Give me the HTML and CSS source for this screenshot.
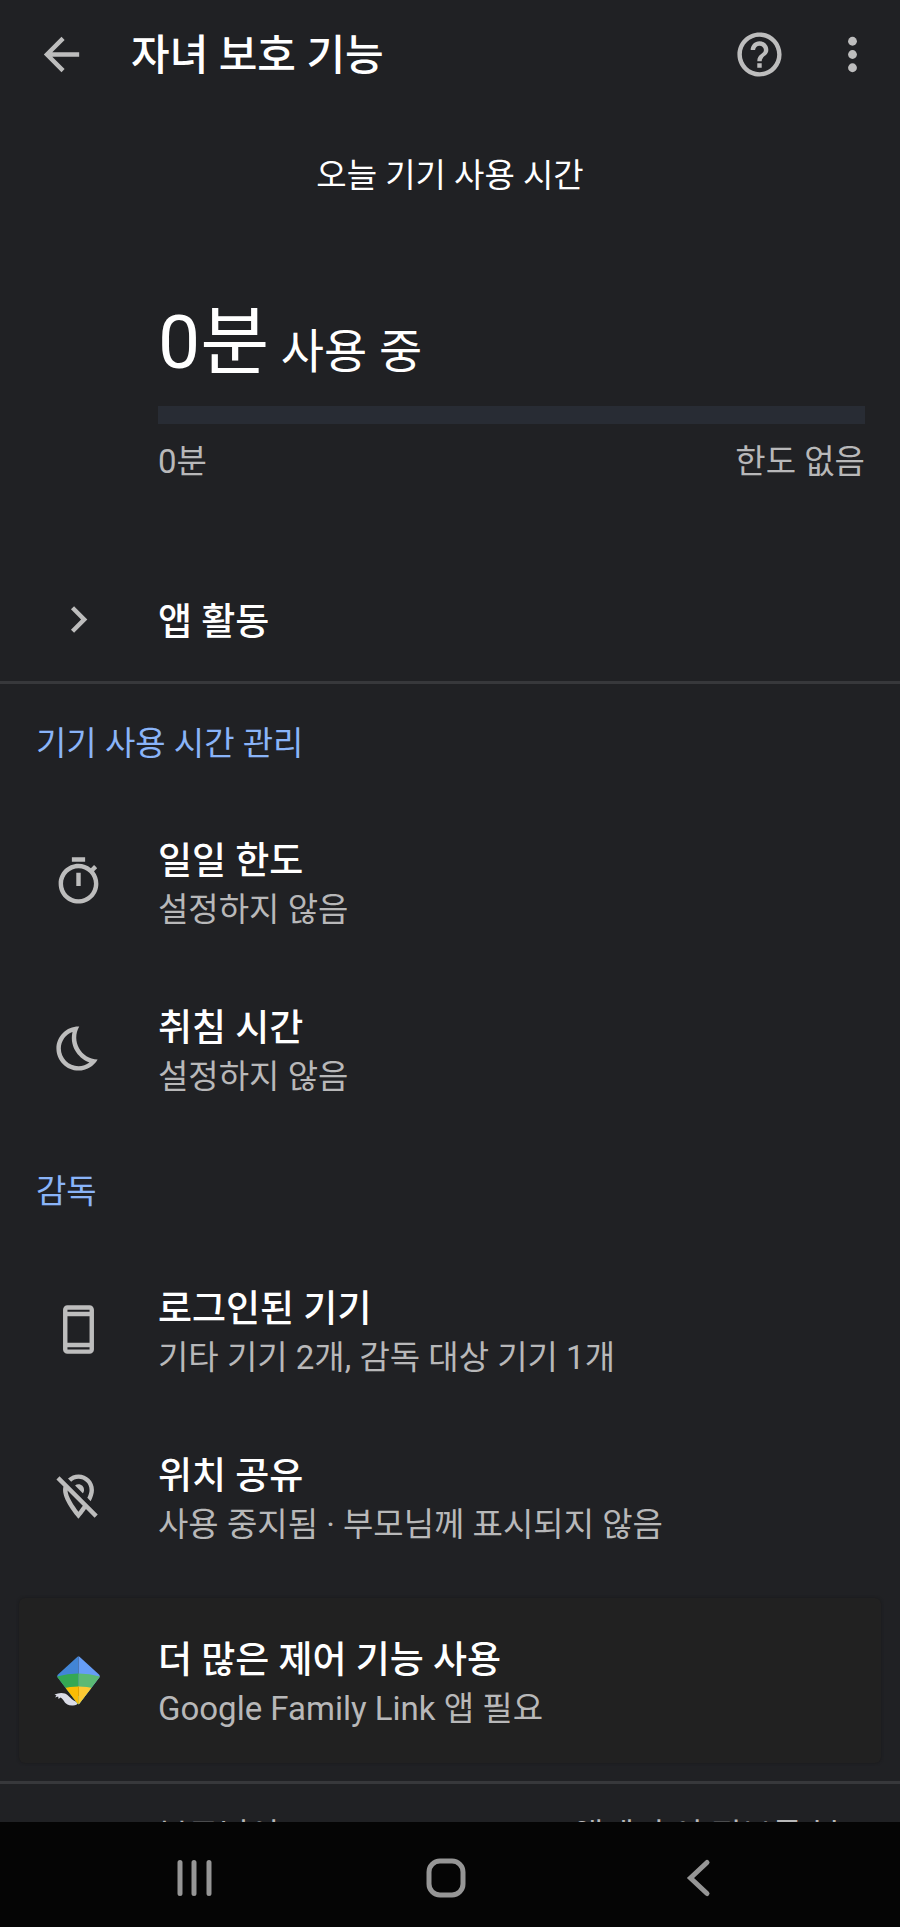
FILE: index.html
```html
<!DOCTYPE html>
<html lang="ko">
<head>
<meta charset="utf-8">
<meta name="viewport" content="width=device-width, initial-scale=1">
<title>자녀 보호 기능</title>
<link rel="stylesheet" href="styles.css">
</head>
<body>
<div class="app">
  <header class="topbar">
    <button class="icon-button" aria-label="뒤로">
      <svg class="icon" viewBox="0 0 24 24"><path d="M20 11H7.830l5.590-5.590L12 4l-8 8 8 8 1.410-1.410L7.830 13H20v-2z"/></svg>
    </button>
    <h1 class="topbar-title">자녀 보호 기능</h1>
    <button class="icon-button" aria-label="도움말">
      <svg class="icon" viewBox="0 0 24 24"><path d="M11 18h2v-2h-2v2zm1-16C6.480 2 2 6.480 2 12s4.480 10 10 10 10-4.480 10-10S17.520 2 12 2zm0 18c-4.410 0-8-3.590-8-8s3.590-8 8-8 8 3.590 8 8-3.590 8-8 8zm0-14c-2.210 0-4 1.790-4 4h2c0-1.100.9-2 2-2s2 .9 2 2c0 2-3 1.750-3 5h2c0-2.250 3-2.500 3-5 0-2.210-1.790-4-4-4z"/></svg>
    </button>
    <button class="icon-button" aria-label="옵션 더보기">
      <svg class="icon" viewBox="0 0 24 24"><circle cx="12" cy="6" r="2"/><circle cx="12" cy="12" r="2"/><circle cx="12" cy="18" r="2"/></svg>
    </button>
  </header>

  <main class="content">
    <section class="usage">
      <h2 class="usage-heading">오늘 기기 사용 시간</h2>
      <div class="usage-body">
        <p class="usage-total"><span class="usage-value">0분</span> 사용 중</p>
        <progress class="usage-bar" max="100" value="0" aria-label="기기 사용 시간"></progress>
        <div class="usage-scale"><span>0분</span><span>한도 없음</span></div>
      </div>
    </section>

    <button class="row row-single">
      <svg class="icon" viewBox="0 0 24 24"><path d="M10 6 8.590 7.410 13.170 12l-4.580 4.590L10 18l6-6-6-6z"/></svg>
      <span class="row-text"><span class="row-title">앱 활동</span></span>
    </button>

    <section class="group">
      <h2 class="group-heading">기기 사용 시간 관리</h2>
      <button class="row">
        <svg class="icon" viewBox="0 0 24 24"><path d="M15 1H9v2h6V1zm-4 13h2V8h-2v6zm8.030-6.610 1.420-1.420c-.43-.51-.9-.99-1.410-1.410l-1.420 1.420C16.070 4.740 14.120 4 12 4c-4.970 0-9 4.030-9 9s4.020 9 9 9 9-4.030 9-9c0-2.120-.74-4.070-1.970-5.610zM12 20c-3.870 0-7-3.130-7-7s3.130-7 7-7 7 3.130 7 7-3.130 7-7 7z"/></svg>
        <span class="row-text"><span class="row-title">일일 한도</span><span class="row-note">설정하지 않음</span></span>
      </button>
      <button class="row">
        <svg class="icon" viewBox="0 0 24 24"><path d="M9.270 4.490c-1.630 7.540 3.750 12.410 7.660 13.800C15.540 19.380 13.810 20 12 20c-4.410 0-8-3.590-8-8 0-3.450 2.200-6.400 5.270-7.510m2.720-2.480C6.620 2 2 6.380 2 12c0 5.520 4.480 10 10 10 3.710 0 6.930-2.020 8.660-5.020-7.510-.25-12.090-8.430-8.320-14.970h-.35z"/></svg>
        <span class="row-text"><span class="row-title">취침 시간</span><span class="row-note">설정하지 않음</span></span>
      </button>
    </section>

    <section class="group group-last">
      <h2 class="group-heading">감독</h2>
      <button class="row">
        <svg class="icon" viewBox="0 0 24 24"><path d="M17 1H7c-1.100 0-2 .9-2 2v18c0 1.100.9 2 2 2h10c1.100 0 2-.9 2-2V3c0-1.100-.9-2-2-2zm0 20H7v-1h10v1zm0-3H7V6h10v12zm0-14H7V3h10v1z"/></svg>
        <span class="row-text"><span class="row-title">로그인된 기기</span><span class="row-note">기타 기기 2개, 감독 대상 기기 1개</span></span>
      </button>
      <button class="row">
        <svg class="icon" viewBox="0 0 24 24"><path d="M12 4c2.760 0 5 2.240 5 5 0 1.060-.39 2.320-1 3.620l1.490 1.490C18.370 12.360 19 10.570 19 9c0-3.870-3.130-7-7-7-1.840 0-3.500.71-4.750 1.860l1.430 1.430C9.550 4.490 10.720 4 12 4zm0 2.500c-.59 0-1.130.21-1.560.56l3.500 3.500c.35-.43.56-.97.56-1.560 0-1.380-1.120-2.500-2.500-2.500zM3.410 2.860 2 4.270l3.180 3.180C5.070 7.950 5 8.470 5 9c0 5.250 7 13 7 13s1.670-1.850 3.380-4.350L19.300 21.570l1.410-1.410L3.410 2.860zM12 18.880c-2.010-2.580-4.800-6.740-4.980-9.590l6.920 6.920c-.65.98-1.330 1.890-1.940 2.670z"/></svg>
        <span class="row-text"><span class="row-title">위치 공유</span><span class="row-note">사용 중지됨 · 부모님께 표시되지 않음</span></span>
      </button>
      <button class="row row-card">
        <svg class="icon" viewBox="0 0 53 53">
          <defs><clipPath id="kite"><path d="M25.500 2.800Q26.500 1.500 27.500 2.800L47 20.500Q48.300 22 47.300 23.500L27.500 49.500Q26.500 51 25.500 49.500L5.700 23.500Q4.700 22 6 20.500Z"/></clipPath></defs>
          <path fill="#dadce6" d="M2.500 40.500Q8 38 13 39.500C17 41 19 46.500 26.500 48.500Q25 51.500 21 51.500C12 52 13 46 8.500 43.500L6.500 45 6.200 42.500 3 43.500 4.500 41.500Z"/>
          <g clip-path="url(#kite)">
            <path fill="#4285d6" d="M0 0h26.500v53H0z"/><path fill="#669df6" d="M26.500 0H53v53H26.500z"/>
            <path fill="#34a853" d="M0 24Q13 19.500 26.500 19.500V53H0z"/><path fill="#5bb974" d="M26.500 19.500Q40 19.500 53 24V53H26.500z"/>
            <path fill="#fbbc04" d="M10 34.500Q18 32.500 26.500 32.500V53H10z"/><path fill="#fcc934" d="M26.500 32.500Q35 32.500 43 34.500V53H26.500z"/>
            <path fill="#e3a500" d="M26 32.500h1V42h-1z"/>
          </g>
        </svg>
        <span class="row-text"><span class="row-title">더 많은 제어 기능 사용</span><span class="row-note">Google Family Link 앱 필요</span></span>
      </button>
    </section>

    <p class="footnote">부모님이 Google Family Link 앱에서 이 정보를 볼 수 있습니다.</p>
  </main>

  <nav class="navbar" aria-label="시스템 탐색">
    <button class="nav-button" aria-label="최근 앱">
      <svg class="nav-icon" viewBox="0 0 40 40"><path d="M6 4.500v31M20 4.500v31M35 4.500v31"/></svg>
    </button>
    <button class="nav-button" aria-label="홈">
      <svg class="nav-icon" viewBox="0 0 40 40"><rect x="3" y="3" width="34" height="34" rx="11"/></svg>
    </button>
    <button class="nav-button" aria-label="뒤로">
      <svg class="nav-icon" viewBox="0 0 40 40"><path d="M28 4.500 11.500 20 28 35.500"/></svg>
    </button>
  </nav>
</div>
</body>
</html>
```
FILE: styles.css
```css
* {
  box-sizing: border-box;
}

body,
h1,
h2,
p {
  margin: 0;
}

body {
  background: #202124;
  color: #fff;
  font-family: Roboto, "Noto Sans CJK KR", sans-serif;
  font-size: 33px;
  line-height: 46px;
}

h1,
h2 {
  font-size: 33px;
  font-weight: 400;
}

button {
  padding: 0;
  border: 0;
  background: none;
  color: inherit;
  font: inherit;
  text-align: left;
}

.app {
  display: flex;
  flex-direction: column;
  height: 100vh;
}

.icon {
  display: block;
  flex: none;
  width: 53px;
  height: 53px;
  fill: #bdbdbd;
}

.topbar {
  display: flex;
  flex: none;
  align-items: center;
  height: 108px;
  padding: 0 21px 0 35px;
  gap: 40px;
}

.topbar-title {
  flex: 1;
  padding: 4px 0 0 3px;
  font-size: 42px;
  font-weight: 500;
  line-height: 54px;
}

.content {
  flex: 1;
  min-height: 0;
  overflow-y: auto;
  scrollbar-width: none;
}

.usage {
  padding: 45px 35px 73px 158px;
}

.usage-heading {
  margin: 0 -35px 0 -158px;
  text-align: center;
}

.usage-body {
  padding-top: 93px;
}

.usage-total {
  font-size: 47px;
  line-height: 100px;
}

.usage-value {
  font-size: 75px;
}

.usage-bar {
  display: block;
  width: 100%;
  height: 18px;
  margin: 4px 0 15px;
  border: 0;
  appearance: none;
}

.usage-bar::-webkit-progress-bar {
  background: #282c34;
}

.usage-scale {
  display: flex;
  justify-content: space-between;
  color: #b8b8b9;
}

.row {
  display: flex;
  align-items: center;
  width: 100%;
  height: 167px;
  padding-left: 52px;
  gap: 53px;
}

.row-single {
  height: 126px;
  border-bottom: 3px solid #37383b;
}

.row-text {
  display: flex;
  flex-direction: column;
  padding-top: 7px;
}

.row-title {
  font-size: 37px;
  font-weight: 500;
  line-height: 50px;
}

.row-note {
  color: #b8b8b9;
}

.group-heading {
  padding: 37px 36px 31px;
  color: #8ab4f8;
}

.group-last {
  padding-bottom: 18px;
  border-bottom: 3px solid #37383b;
}

.row-card {
  width: auto;
  min-width: calc(100% - 38px);
  height: 165px;
  margin: 18px 19px 0;
  padding-left: 33px;
  border-radius: 6px;
  background: #212121;
  box-shadow: 0 0 3px #18191b;
}

.footnote {
  padding: 29px 35px 29px 158px;
  color: #b8b8b9;
}

.navbar {
  display: grid;
  flex: none;
  grid-template-columns: repeat(3, 1fr);
  height: 105px;
  padding: 7px 75px 0 68px;
  background: #050505;
}

.nav-button {
  display: grid;
  place-items: center;
}

.nav-icon {
  width: 40px;
  height: 40px;
  fill: none;
  stroke: #969696;
  stroke-width: 5px;
  stroke-linecap: round;
}
```
